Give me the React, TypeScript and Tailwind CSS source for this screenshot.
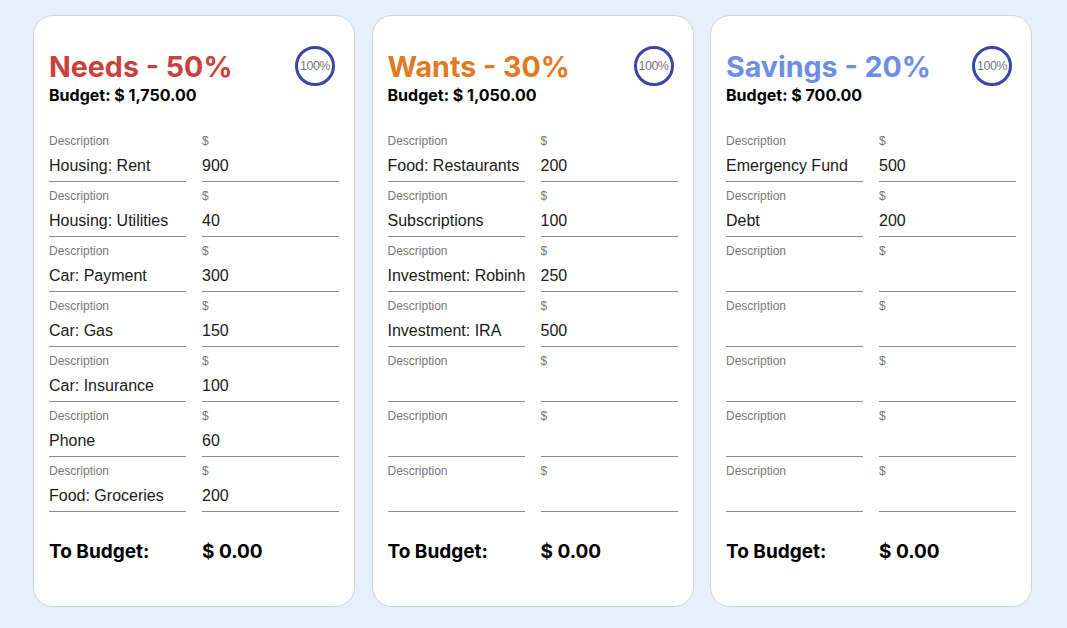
const cards = [
  {
    title: "Needs - 50%",
    color: "text-[#c8423b]",
    budget: "$ 1,750.00",
    rows: [
      ["Housing: Rent", "900"],
      ["Housing: Utilities", "40"],
      ["Car: Payment", "300"],
      ["Car: Gas", "150"],
      ["Car: Insurance", "100"],
      ["Phone", "60"],
      ["Food: Groceries", "200"],
    ],
  },
  {
    title: "Wants - 30%",
    color: "text-[#e17a22]",
    budget: "$ 1,050.00",
    rows: [
      ["Food: Restaurants", "200"],
      ["Subscriptions", "100"],
      ["Investment: Robinhood", "250"],
      ["Investment: IRA", "500"],
      ["", ""],
      ["", ""],
      ["", ""],
    ],
  },
  {
    title: "Savings - 20%",
    color: "text-[#6b8ee9]",
    budget: "$ 700.00",
    rows: [
      ["Emergency Fund", "500"],
      ["Debt", "200"],
      ["", ""],
      ["", ""],
      ["", ""],
      ["", ""],
      ["", ""],
    ],
  },
];

function Field({ label, value }: { label: string; value: string }) {
  return (
    <div className="flex flex-col min-w-0">
      <label className="text-[12px] leading-[14px] text-[#777] font-['Liberation_Sans',Arial,sans-serif]">
        {label}
      </label>
      <input
        type="text"
        defaultValue={value}
        className="w-full h-[34px] pt-[2px] bg-transparent border-b border-[#8a8a8a] outline-none text-[16px] text-[#1a1a1a] font-['Liberation_Sans',Arial,sans-serif] px-0"
      />
    </div>
  );
}

function BudgetCard({ card }: { card: (typeof cards)[number] }) {
  return (
    <div className="w-[322px] h-[592px] shrink-0 bg-white border border-[#cfd4d9] rounded-[20px] px-[15px] pt-[34px]">
      <div className="flex items-start justify-between">
        <div>
          <h2 className={`text-[28.6px] leading-[34px] font-bold font-['Inter',sans-serif] ${card.color}`}>
            {card.title}
          </h2>
          <div className="mt-[1px] text-[16px] leading-[20px] font-bold text-black font-['Inter',sans-serif]">
            Budget: {card.budget}
          </div>
        </div>
        <div className="mt-[-4px] mr-[4px] w-[40px] h-[40px] rounded-full border-[3px] border-[#3a45a8] flex items-center justify-center text-[12.5px] text-[#777] font-['Liberation_Sans',Arial,sans-serif] tracking-[-0.5px]">
          100%
        </div>
      </div>

      <div className="mt-[29px] flex flex-col gap-[7px]">
        {card.rows.map(([desc, amt], i) => (
          <div key={i} className="grid grid-cols-2 gap-4">
            <Field label="Description" value={desc} />
            <Field label="$" value={amt} />
          </div>
        ))}
      </div>

      <div className="mt-[28px] grid grid-cols-2 gap-4 text-[19px] leading-[24px] font-bold text-black font-['Inter',sans-serif]">
        <div>To Budget:</div>
        <div>$ 0.00</div>
      </div>
    </div>
  );
}

export default function App() {
  return (
    <main className="min-h-screen w-full bg-[#e6f0fa] pl-[33px] pt-[15px] overflow-hidden">
      <div className="flex gap-[16.5px]">
        {cards.map((c) => (
          <BudgetCard key={c.title} card={c} />
        ))}
      </div>
    </main>
  );
}
